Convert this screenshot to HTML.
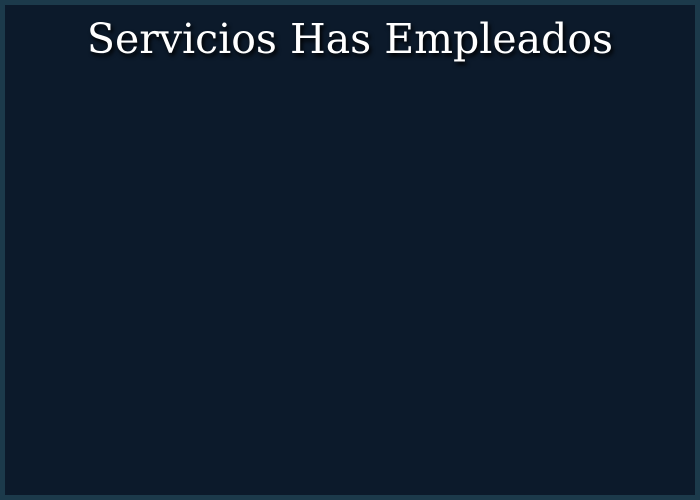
<!DOCTYPE html>
<html><head><meta charset="utf-8"><style>
html,body{margin:0;padding:0;}
body{width:700px;height:500px;box-sizing:border-box;border:5px solid #1c3a4b;background:#0c1a2b;overflow:hidden;}
h1{margin:0;padding-top:10px;text-align:center;color:#fff;font-family:"DejaVu Serif","Liberation Serif",serif;font-weight:normal;font-size:41px;line-height:48px;text-shadow:2px 3px 4px #000;}
</style></head><body>
<h1>Servicios Has Empleados</h1>
</body></html>
